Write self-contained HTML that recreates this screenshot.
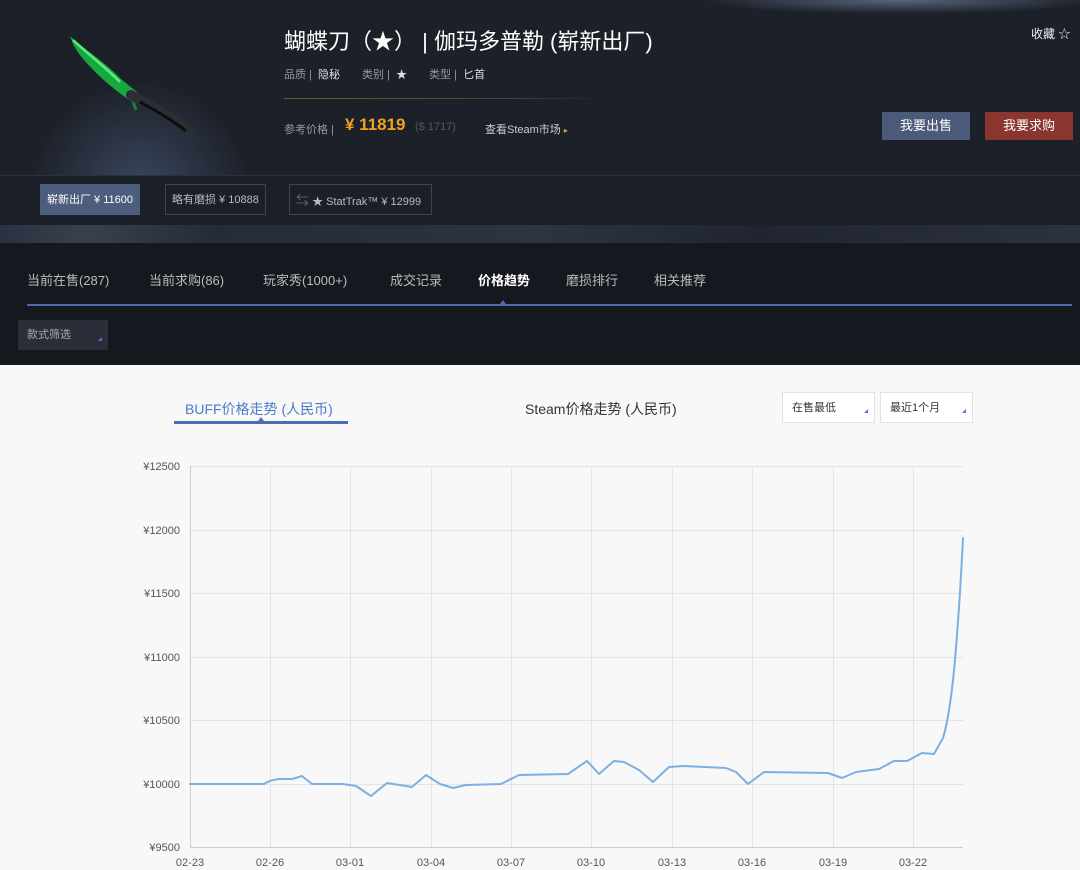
<!DOCTYPE html>
<html><head><meta charset="utf-8"><style>
*{margin:0;padding:0;box-sizing:border-box}
body{width:1080px;height:870px;overflow:hidden;background:#f8f8f8;font-family:"Liberation Sans","Noto Sans CJK SC",sans-serif;position:relative}
.abs{position:absolute}
.hdr{left:0;top:0;width:1080px;height:175px;background:radial-gradient(ellipse 110px 110px at 140px 190px,rgba(90,110,150,.5),rgba(0,0,0,0)),radial-gradient(ellipse 200px 14px at 900px 0,rgba(150,170,210,.5),rgba(0,0,0,0)),#1c2028}
.var{left:0;top:175px;width:1080px;height:50px;background:#1b1f27;border-top:1px solid #2a3040}
.strip{left:0;top:225px;width:1080px;height:18px;background:linear-gradient(90deg,#2a3140,#39404e 8%,#252b38 20%,#2d3442 50%,#20252f 70%,#2c323e 100%)}
.nav{left:0;top:243px;width:1080px;height:122px;background:#161820}
.t{color:#ddd;white-space:nowrap}
.btn{height:28px;line-height:28px;text-align:center;color:#fff;font-size:13px}
.vb{top:184px;height:31px;line-height:31px;font-size:11px;color:#bbb;border:1px solid #3e4452;padding:0 6px}
.tab{top:270px;font-size:13px;color:#bbb}
.sel{height:31px;background:#fff;border:1px solid #e2e2e2;font-size:11px;color:#333;line-height:31px;padding-left:9px}
.sel:after,.dd:after{content:"";position:absolute;right:6px;bottom:9px;border-left:4px solid transparent;border-bottom:4px solid #4a7cc6}
</style></head><body>
<div class="abs hdr"></div>
<svg class="abs" style="left:0;top:0" width="260" height="175" viewBox="0 0 260 175">
<path d="M70 36 C85 50 105 62 122 80 L137 92 L131 101 C114 90 97 75 84 60 C77 52 73 45 70 36 Z" fill="#17a840"/>
<path d="M73 40 C88 54 104 66 120 82" stroke="#62e882" stroke-width="2.5" fill="none"/>
<path d="M132 98 L136 110" stroke="#1d7a3a" stroke-width="3"/>
<path d="M131 95 C152 106 170 116 190 133" stroke="#2b2e33" stroke-width="10" fill="none" stroke-linecap="round"/>
<path d="M140 102 C158 112 172 120 186 131" stroke="#0c0d10" stroke-width="3" fill="none"/>
</svg>
<div class="abs t" style="left:284px;top:24px;font-size:22px;color:#fff">蝴蝶刀（★） | 伽玛多普勒 (崭新出厂)</div>
<div class="abs t" style="left:284px;top:66px;font-size:11px;color:#999">品质 | &nbsp;<span style="color:#ddd">隐秘</span><span style="margin-left:22px">类别 | &nbsp;<span style="color:#ddd">★</span></span><span style="margin-left:22px">类型 | &nbsp;<span style="color:#ddd">匕首</span></span></div>
<div class="abs" style="left:284px;top:98px;width:320px;height:1px;background:linear-gradient(90deg,#6b5a30,#4a4432 70%,rgba(0,0,0,0))"></div>
<div class="abs t" style="left:284px;top:121px;font-size:11px;color:#999">参考价格 |</div>
<div class="abs t" style="left:345px;top:115px;font-size:17px;color:#f0a020;font-weight:bold">¥ 11819</div>
<div class="abs t" style="left:415px;top:121px;font-size:11px;color:#556">($ 1717)</div>
<div class="abs t" style="left:485px;top:121px;font-size:11px;color:#ccc">查看Steam市场 <span style="color:#e0a030;font-size:8px">▸</span></div>
<div class="abs t" style="left:1031px;top:25px;font-size:12px;color:#eee">收藏 ☆</div>
<div class="abs btn" style="left:882px;top:112px;width:88px;background:#4a5a78">我要出售</div>
<div class="abs btn" style="left:985px;top:112px;width:88px;background:#8b3530">我要求购</div>
<div class="abs var"></div>
<div class="abs vb" style="left:40px;background:#4d5d7d;color:#fff;border-color:#4d5d7d">崭新出厂 ¥ 11600</div>
<div class="abs vb" style="left:165px">略有磨损 ¥ 10888</div>
<div class="abs vb" style="left:289px;width:143px"><span style="color:#667;font-size:13px">⇆</span> ★ StatTrak™ ¥ 12999</div>
<div class="abs strip"></div>
<div class="abs nav"></div>
<div class="abs t tab" style="left:27px">当前在售(287)</div>
<div class="abs t tab" style="left:149px">当前求购(86)</div>
<div class="abs t tab" style="left:263px">玩家秀(1000+)</div>
<div class="abs t tab" style="left:390px">成交记录</div>
<div class="abs t tab" style="left:478px;color:#fff;font-weight:bold">价格趋势</div>
<div class="abs t tab" style="left:566px">磨损排行</div>
<div class="abs t tab" style="left:654px">相关推荐</div>
<div class="abs" style="left:27px;top:304px;width:1045px;height:2px;background:#4a6aa8"></div>
<div class="abs" style="left:500px;top:300px;border-left:3px solid transparent;border-right:3px solid transparent;border-bottom:4px solid #4a6aa8"></div>
<div class="abs dd" style="left:18px;top:320px;width:90px;height:30px;background:#2a2e38;color:#aaa;font-size:11px;line-height:30px;padding-left:9px">款式筛选</div>
<div class="abs t" style="left:185px;top:399px;font-size:14px;color:#4a7cc6">BUFF价格走势 (人民币)</div>
<div class="abs" style="left:174px;top:421px;width:174px;height:3px;background:#4a6fb8"></div>
<div class="abs" style="left:258px;top:417px;border-left:3px solid transparent;border-right:3px solid transparent;border-bottom:4px solid #4a6fb8"></div>
<div class="abs t" style="left:525px;top:399px;font-size:14px;color:#333">Steam价格走势 (人民币)</div>
<div class="abs sel" style="left:782px;top:392px;width:93px">在售最低</div>
<div class="abs sel" style="left:880px;top:392px;width:93px">最近1个月</div>
<svg class="abs" style="left:0;top:455px" width="1080" height="415" viewBox="0 455 1080 415" font-family="Liberation Sans" font-size="11" fill="#555">
<g stroke="#e4e4e4" stroke-width="1">
<line x1="190" y1="466.5" x2="963" y2="466.5"/><line x1="190" y1="530.5" x2="963" y2="530.5"/><line x1="190" y1="593.5" x2="963" y2="593.5"/><line x1="190" y1="657.5" x2="963" y2="657.5"/><line x1="190" y1="720.5" x2="963" y2="720.5"/><line x1="190" y1="784.5" x2="963" y2="784.5"/>
<line x1="270.5" y1="466" x2="270.5" y2="847"/><line x1="350.5" y1="466" x2="350.5" y2="847"/><line x1="431.5" y1="466" x2="431.5" y2="847"/><line x1="511.5" y1="466" x2="511.5" y2="847"/><line x1="591.5" y1="466" x2="591.5" y2="847"/><line x1="672.5" y1="466" x2="672.5" y2="847"/><line x1="752.5" y1="466" x2="752.5" y2="847"/><line x1="833.5" y1="466" x2="833.5" y2="847"/><line x1="913.5" y1="466" x2="913.5" y2="847"/>
</g>
<line x1="190.5" y1="466" x2="190.5" y2="848" stroke="#ccc"/><line x1="190" y1="847.5" x2="963" y2="847.5" stroke="#ccc"/>
<g text-anchor="end"><text x="180" y="470">¥12500</text><text x="180" y="534">¥12000</text><text x="180" y="597">¥11500</text><text x="180" y="661">¥11000</text><text x="180" y="724">¥10500</text><text x="180" y="788">¥10000</text><text x="180" y="851">¥9500</text></g>
<g text-anchor="middle"><text x="190" y="866">02-23</text><text x="270" y="866">02-26</text><text x="350" y="866">03-01</text><text x="431" y="866">03-04</text><text x="511" y="866">03-07</text><text x="591" y="866">03-10</text><text x="672" y="866">03-13</text><text x="752" y="866">03-16</text><text x="833" y="866">03-19</text><text x="913" y="866">03-22</text></g>
<path fill="none" stroke="#7cb0e4" stroke-width="2" stroke-linejoin="round" stroke-linecap="round" d="M190 784 L264 784 Q270 780 279 779 L292 779 L302 776 L312 784 L343 784 L356 786 L371 796 L387 783 L412 787 L426 775 L440 784 L453 788 L466 785 L501 784 L519 775 L568 774 L587 761 L599 774 L614 761 L624 762 L639 770 L653 782 L669 767 L683 766 L726 768 L736 772 L748 784 L764 772 L828 773 L842 778 L856 772 L879 769 L894 761 L907 761 L922 753 L934 754 L943 738 Q950 715 955 660 Q960 600 963 538"/>
</svg>
</body></html>
